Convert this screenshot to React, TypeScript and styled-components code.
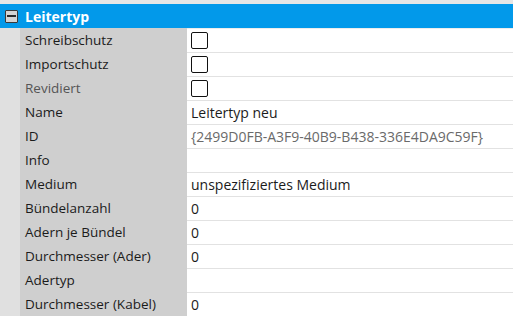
import React from 'react';
import styled, { createGlobalStyle } from 'styled-components';

const GlobalStyle = createGlobalStyle`
  html, body {
    margin: 0;
    padding: 0;
    background: #e6e6e6;
    overflow: hidden;
  }
  body {
    font-family: 'Open Sans', 'Noto Sans', 'Liberation Sans', sans-serif;
    font-size: 13.5px;
    color: #1b1b1b;
  }
`;

type Row = {
  label: string;
  value?: string;
  check?: boolean;
  dim?: boolean;
  valueDim?: boolean;
};

const rows: Row[] = [
  { label: 'Schreibschutz', check: true },
  { label: 'Importschutz', check: true },
  { label: 'Revidiert', check: true, dim: true },
  { label: 'Name', value: 'Leitertyp neu' },
  { label: 'ID', value: '{2499D0FB-A3F9-40B9-B438-336E4DA9C59F}', valueDim: true },
  { label: 'Info' },
  { label: 'Medium', value: 'unspezifiziertes Medium' },
  { label: 'Bündelanzahl', value: '0' },
  { label: 'Adern je Bündel', value: '0' },
  { label: 'Durchmesser (Ader)', value: '0' },
  { label: 'Adertyp' },
  { label: 'Durchmesser (Kabel)', value: '0' },
];

const Grid = styled.div`
  padding-top: 4px;
  width: 513px;
`;

const Header = styled.div`
  display: flex;
  align-items: center;
  height: 24px;
  background: #0299ea;
  color: #fff;
  font-weight: 700;
  font-size: 14px;
`;

const Toggle = styled.div`
  box-sizing: border-box;
  width: 13px;
  height: 13px;
  margin: 0 7px 0 5px;
  background: #d4d4d4;
  border: 1px solid #3a3a3a;
  border-radius: 1px;
  display: flex;
  align-items: center;
  justify-content: center;
  &:after {
    content: '';
    width: 9px;
    height: 2px;
    background: #2a2a2a;
  }
`;

const Line = styled.div`
  display: flex;
  height: 24px;
  background: #e0e0e0;
`;

const Gutter = styled.div`
  width: 20px;
  flex-shrink: 0;
`;

const Label = styled.div<{ $dim?: boolean }>`
  width: 162px;
  padding-left: 5px;
  flex-shrink: 0;
  background: #cfcfcf;
  display: flex;
  align-items: center;
  color: ${p => (p.$dim ? '#555' : '#1b1b1b')};
  white-space: nowrap;
`;

const Value = styled.div<{ $dim?: boolean; $first?: boolean }>`
  flex: 1;
  background: #fff;
  display: flex;
  align-items: center;
  padding-left: 4px;
  box-sizing: border-box;
  border-top: 1px solid ${p => (p.$first ? '#ececec' : '#e2e2e2')};
  font-size: 14px;
  color: ${p => (p.$dim ? '#6a6a6a' : '#1b1b1b')};
  white-space: nowrap;
`;

const Check = styled.div`
  box-sizing: border-box;
  width: 17px;
  height: 17px;
  border: 1.5px solid #111;
  border-radius: 2px;
  background: #fff;
`;

export default function App() {
  return (
    <Grid>
      <GlobalStyle />
      <Header>
        <Toggle />
        Leitertyp
      </Header>
      {rows.map((r, i) => (
        <Line key={r.label}>
          <Gutter />
          <Label $dim={r.dim}>{r.label}</Label>
          <Value $dim={r.valueDim} $first={i === 0}>
            {r.check ? <Check /> : r.value}
          </Value>
        </Line>
      ))}
    </Grid>
  );
}
